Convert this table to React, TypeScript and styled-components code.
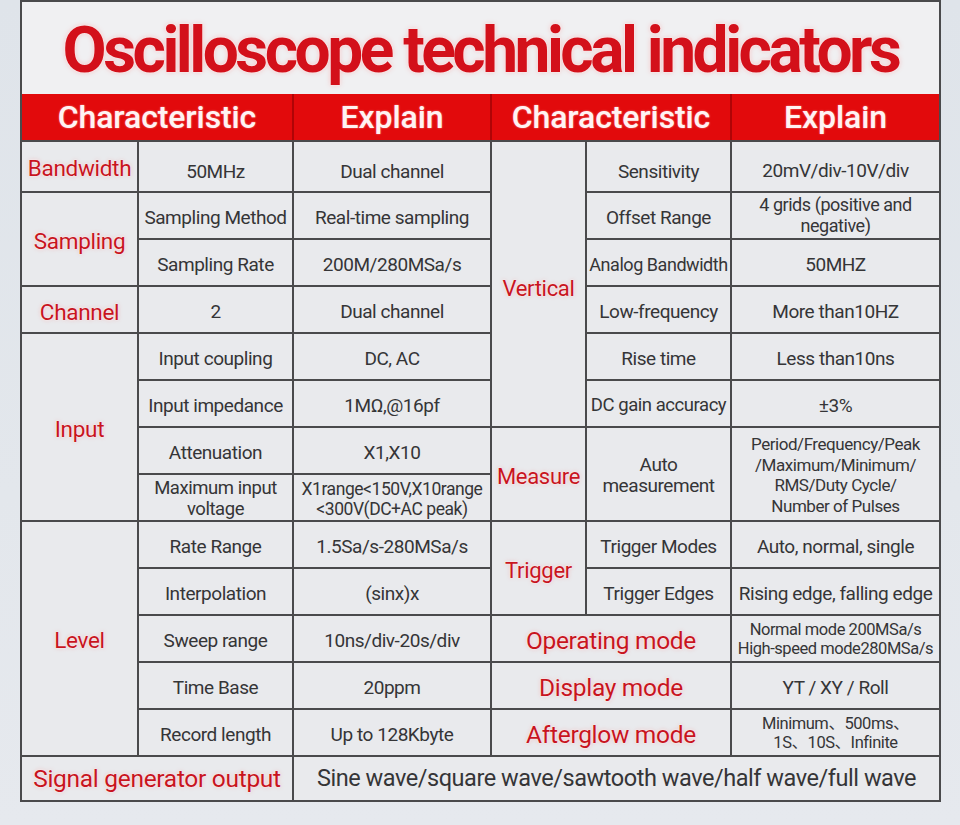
import React from "react";
import styled, { createGlobalStyle } from "styled-components";

const GlobalStyle = createGlobalStyle`
  html, body {
    margin: 0;
    padding: 0;
  }
  body {
    background: linear-gradient(180deg, #dfe4ea 0%, #e3e7ec 60%, #e6e9ee 100%);
    font-family: Roboto, "Liberation Sans", "Noto Sans CJK SC", sans-serif;
  }
`;

const COLUMNS = "115px 153px 196px 93px 143px 207px";
const LINE = "#4a4a4c";

const Page = styled.div`
  width: 960px;
  height: 825px;
  padding-left: 20px;
  box-sizing: border-box;
  overflow: hidden;
`;

const Sheet = styled.div`
  width: 921px;
  box-sizing: border-box;
  border: 2px solid ${LINE};
  border-bottom: none;
  background: #f0f0f2;
`;

const Title = styled.h1`
  margin: 0;
  height: 92px;
  padding-top: 4px;
  box-sizing: border-box;
  display: flex;
  align-items: center;
  justify-content: center;
  font-family: Roboto, "Liberation Sans", sans-serif;
  font-weight: 700;
  font-size: 64px;
  letter-spacing: -3.5px;
  color: #d3101a;
  text-shadow: 0 0 2px #fff, 0 0 5px rgba(255, 90, 90, 0.35);
`;

const HeadRow = styled.div`
  display: grid;
  grid-template-columns: ${COLUMNS};
  gap: 2px;
  height: 46px;
  background: #b00406;
`;

const HeadCell = styled.div<{ $col: string }>`
  grid-column: ${(p) => p.$col};
  display: flex;
  align-items: center;
  justify-content: center;
  background: #e20a0c;
  color: #fff3f3;
  font-size: 32px;
  font-weight: 500;
  letter-spacing: -0.1px;
  text-shadow: 0 0 2px rgba(255, 190, 190, 0.7);
`;

const Body = styled.div`
  display: grid;
  grid-template-columns: ${COLUMNS};
  grid-template-rows: 49px repeat(12, 45px) 43px;
  gap: 2px;
  background: ${LINE};
  border-top: 2px solid ${LINE};
  border-bottom: 2px solid ${LINE};
`;

const Cell = styled.div<{ $col: string; $row: string; $size?: number; $lh?: number; $drop?: number }>`
  grid-column: ${(p) => p.$col};
  grid-row: ${(p) => p.$row};
  display: flex;
  align-items: center;
  justify-content: center;
  padding-top: ${(p) => p.$drop ?? 4}px;
  box-sizing: border-box;
  text-align: center;
  background: #e9eaed;
  color: #353537;
  font-size: ${(p) => p.$size ?? 19}px;
  line-height: ${(p) => p.$lh ?? 21}px;
  letter-spacing: -0.45px;
  white-space: nowrap;
  overflow: hidden;
`;

const Label = styled(Cell)`
  color: #c8141e;
  font-size: ${(p) => p.$size ?? 22.5}px;
  letter-spacing: -0.3px;
  text-shadow: 0 0 2px #fff, 0 0 4px rgba(255, 110, 110, 0.4);
`;

type Item = {
  col: string;
  row: string;
  text: React.ReactNode;
  red?: boolean;
  size?: number;
  lh?: number;
  drop?: number;
};

const items: Item[] = [
  // left half
  { col: "1", row: "1", text: "Bandwidth", red: true },
  { col: "2", row: "1", text: "50MHz", drop: 10 },
  { col: "3", row: "1", text: "Dual channel", drop: 10 },
  { col: "1", row: "2 / span 2", text: "Sampling", red: true },
  { col: "2", row: "2", text: "Sampling Method" },
  { col: "3", row: "2", text: "Real-time sampling" },
  { col: "2", row: "3", text: "Sampling Rate" },
  { col: "3", row: "3", text: "200M/280MSa/s" },
  { col: "1", row: "4", text: "Channel", red: true, drop: 6 },
  { col: "2", row: "4", text: "2" },
  { col: "3", row: "4", text: "Dual channel" },
  { col: "1", row: "5 / span 4", text: "Input", red: true },
  { col: "2", row: "5", text: "Input coupling" },
  { col: "3", row: "5", text: "DC, AC" },
  { col: "2", row: "6", text: "Input impedance" },
  { col: "3", row: "6", text: "1MΩ,@16pf" },
  { col: "2", row: "7", text: "Attenuation" },
  { col: "3", row: "7", text: "X1,X10" },
  { col: "2", row: "8", text: <>Maximum input<br />voltage</>, size: 18.5, lh: 20.5, drop: 2 },
  { col: "3", row: "8", text: <>X1range&lt;150V,X10range<br />&lt;300V(DC+AC peak)</>, size: 17.5, lh: 20, drop: 2 },
  { col: "1", row: "9 / span 5", text: "Level", red: true },
  { col: "2", row: "9", text: "Rate Range" },
  { col: "3", row: "9", text: "1.5Sa/s-280MSa/s" },
  { col: "2", row: "10", text: "Interpolation" },
  { col: "3", row: "10", text: "(sinx)x" },
  { col: "2", row: "11", text: "Sweep range" },
  { col: "3", row: "11", text: "10ns/div-20s/div" },
  { col: "2", row: "12", text: "Time Base" },
  { col: "3", row: "12", text: "20ppm" },
  { col: "2", row: "13", text: "Record length" },
  { col: "3", row: "13", text: "Up to 128Kbyte" },
  { col: "1 / span 2", row: "14", text: "Signal generator output", red: true, size: 24.5, drop: 0 },
  { col: "3 / span 4", row: "14", text: "Sine wave/square wave/sawtooth wave/half wave/full wave", size: 23.5, drop: 0 },
  // right half
  { col: "4", row: "1 / span 6", text: "Vertical", red: true, size: 22, drop: 8 },
  { col: "5", row: "1", text: "Sensitivity", drop: 10 },
  { col: "6", row: "1", text: "20mV/div-10V/div", drop: 8 },
  { col: "5", row: "2", text: "Offset Range" },
  { col: "6", row: "2", text: <>4 grids (positive and<br />negative)</>, size: 18, lh: 20.5, drop: 0 },
  { col: "5", row: "3", text: "Analog Bandwidth", size: 18 },
  { col: "6", row: "3", text: "50MHZ" },
  { col: "5", row: "4", text: "Low-frequency" },
  { col: "6", row: "4", text: "More than10HZ" },
  { col: "5", row: "5", text: "Rise time" },
  { col: "6", row: "5", text: "Less than10ns" },
  { col: "5", row: "6", text: "DC gain accuracy", size: 18.5 },
  { col: "6", row: "6", text: "±3%" },
  { col: "4", row: "7 / span 2", text: "Measure", red: true, size: 22 },
  { col: "5", row: "7 / span 2", text: <>Auto<br />measurement</>, lh: 21.5, drop: 2 },
  {
    col: "6",
    row: "7 / span 2",
    text: <>Period/Frequency/Peak<br />/Maximum/Minimum/<br />RMS/Duty Cycle/<br />Number of Pulses</>,
    size: 17,
    lh: 20.5,
    drop: 2,
  },
  { col: "4", row: "9 / span 2", text: "Trigger", red: true, size: 22 },
  { col: "5", row: "9", text: "Trigger Modes" },
  { col: "6", row: "9", text: "Auto, normal, single" },
  { col: "5", row: "10", text: "Trigger Edges" },
  { col: "6", row: "10", text: "Rising edge, falling edge" },
  { col: "4 / span 2", row: "11", text: "Operating mode", red: true, size: 24.5 },
  { col: "6", row: "11", text: <>Normal mode 200MSa/s<br />High-speed mode280MSa/s</>, size: 16.5, lh: 19, drop: 0 },
  { col: "4 / span 2", row: "12", text: "Display mode", red: true, size: 24.5 },
  { col: "6", row: "12", text: "YT / XY / Roll" },
  { col: "4 / span 2", row: "13", text: "Afterglow mode", red: true, size: 24.5 },
  { col: "6", row: "13", text: <>Minimum、500ms、<br />1S、10S、Infinite</>, size: 16.5, lh: 18.5, drop: 2 },
];

export default function App() {
  return (
    <>
      <GlobalStyle />
      <Page>
        <Sheet>
          <Title>Oscilloscope technical indicators</Title>
          <HeadRow>
            <HeadCell $col="1 / span 2">Characteristic</HeadCell>
            <HeadCell $col="3">Explain</HeadCell>
            <HeadCell $col="4 / span 2">Characteristic</HeadCell>
            <HeadCell $col="6">Explain</HeadCell>
          </HeadRow>
          <Body>
            {items.map((it, i) => {
              const Comp = it.red ? Label : Cell;
              return (
                <Comp key={i} $col={it.col} $row={it.row} $size={it.size} $lh={it.lh} $drop={it.drop}>
                  <span>{it.text}</span>
                </Comp>
              );
            })}
          </Body>
        </Sheet>
      </Page>
    </>
  );
}
